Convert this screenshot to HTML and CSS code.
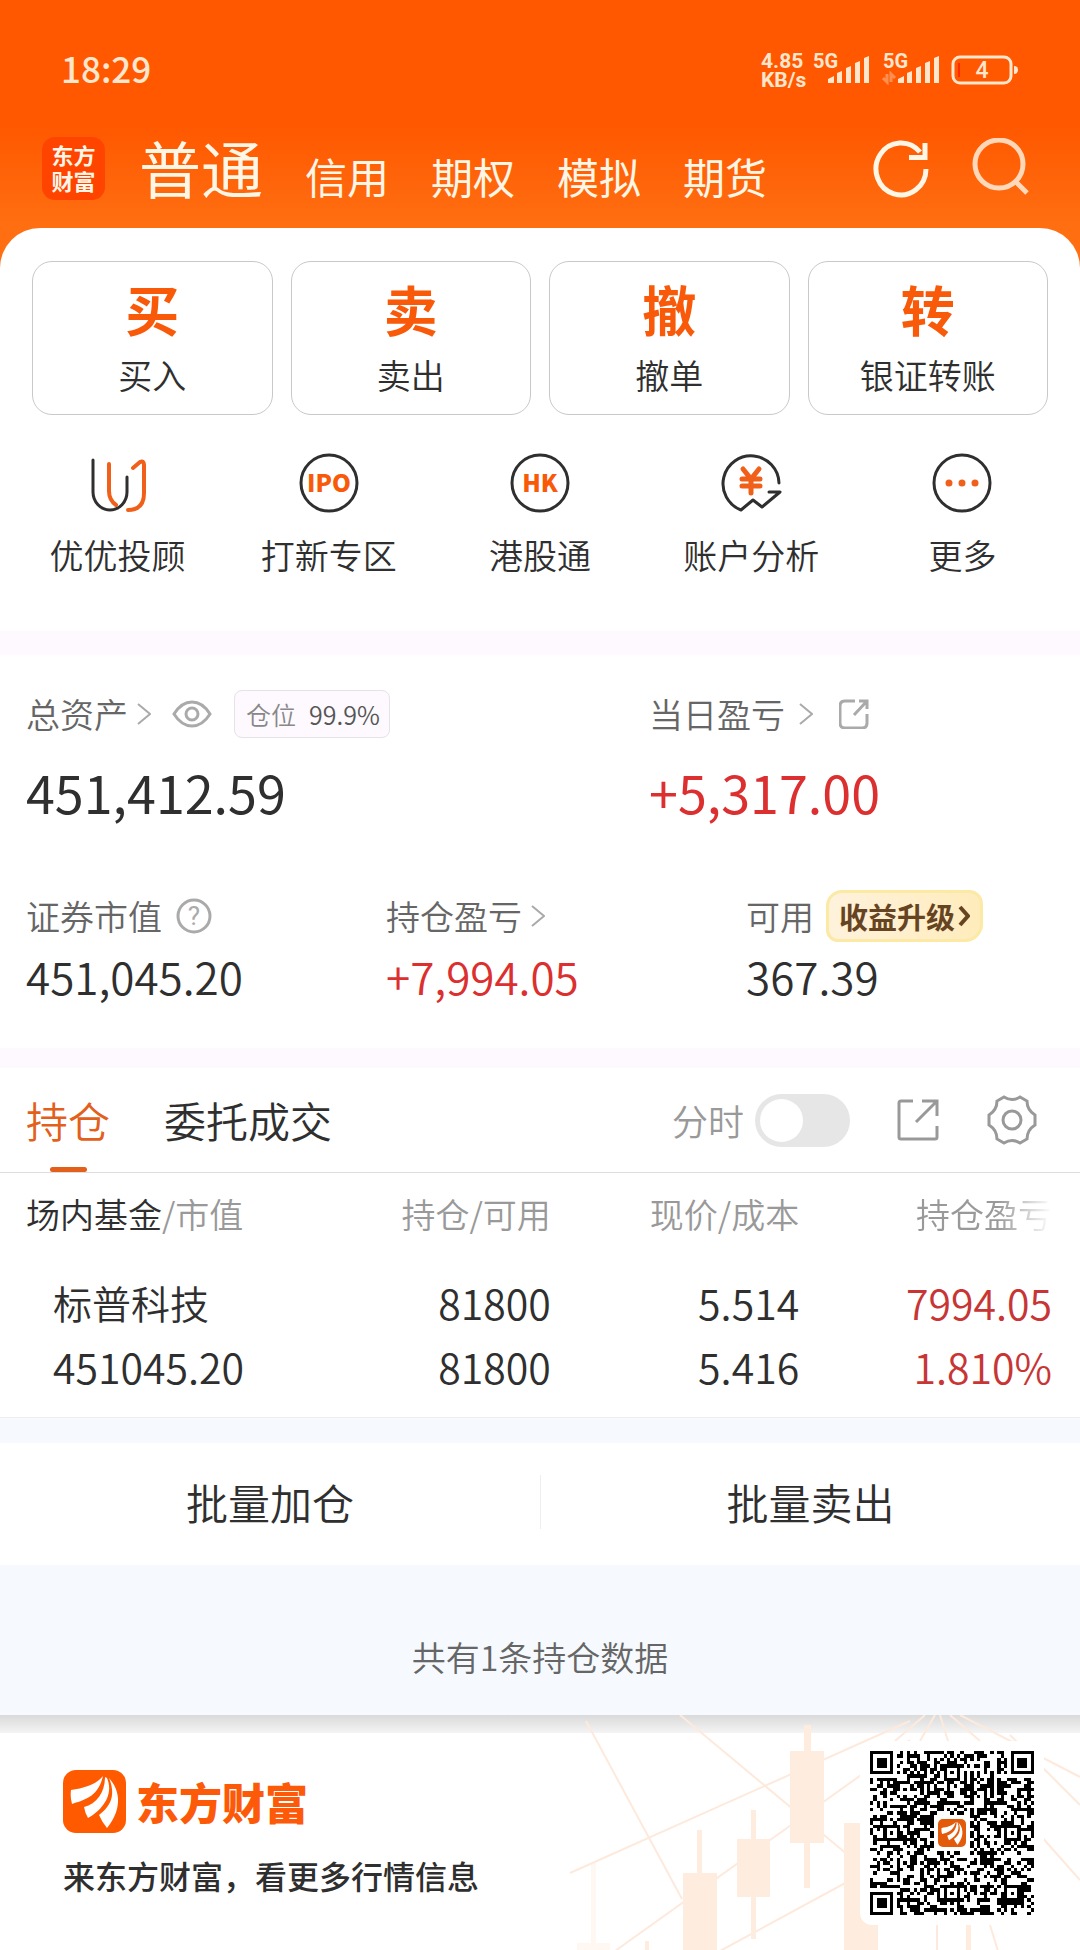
FILE: index.html
```html
<!DOCTYPE html>
<html lang="zh-CN">
<head>
<meta charset="utf-8">
<meta name="viewport" content="width=device-width, initial-scale=1">
<title>东方财富 - 普通交易</title>
<link rel="stylesheet" href="styles.css">
</head>
<body>
<svg class="defs" aria-hidden="true">
  <symbol id="petals" viewBox="0 0 63 63">
    <path d="M40 6C33 15 21 18 8 20Q7 27 9 34C20 30 35 28 40 6Z"/>
    <path d="M42 7C42 22 34 34 21 37Q22 43 25 48C36 42 52 27 44 8Z"/>
    <path d="M46 8C53 25 48 36 36 45Q39 52 44 58C54 46 62 26 46 8Z"/>
  </symbol>
  <symbol id="chevron" viewBox="0 0 14 24"><path d="M1 2l12 10L1 22"/></symbol>
</svg>

<header class="top">
  <div class="status">
    <time class="clock">18:29</time>
    <div class="signals">
      <div class="speed">4.85<br>KB/s</div>
      <svg class="radio" viewBox="0 -6 206 42" width="206" height="42">
        <g class="net"><text x="0" y="18">5G</text><text x="70" y="18">5G</text></g>
        <g class="bars">
          <path d="M15 33v-4l6-3v7zM24 33V23l5-2v12zM33 33V18l5-2v17zM42 33V13l5-2v22zM51 33V8l5-2v27z"/>
          <path d="M85 33v-4l6-3v7zM94 33V23l5-2v12zM103 33V18l5-2v17zM112 33V13l5-2v22zM121 33V8l5-2v27z"/>
        </g>
        <path class="traffic" d="M74 24v8l-4-4M78 32v-8l4 4"/>
        <rect class="cell" x="140" y="7" width="58" height="26" rx="7"/>
        <path class="charge" d="M146 13v14"/>
        <path class="tip" d="M201 16q4 0 4 4t-4 4z"/>
        <text class="level" x="169" y="28">4</text>
      </svg>
    </div>
  </div>
  <div class="accounts">
    <div class="brand">东方<br>财富</div>
    <nav class="modes">
      <a href="#" class="mode current">普通</a>
      <a href="#" class="mode">信用</a>
      <a href="#" class="mode">期权</a>
      <a href="#" class="mode">模拟</a>
      <a href="#" class="mode">期货</a>
    </nav>
    <button class="icon-btn" aria-label="刷新">
      <svg width="60" height="60" viewBox="0 0 60 60"><path d="M55 31A25 26 0 1 1 49 14M54 5V19.500H38"/></svg>
    </button>
    <button class="icon-btn faded" aria-label="搜索">
      <svg width="60" height="60" viewBox="0 0 60 60"><circle cx="28" cy="26" r="24"/><path d="M44 43l12 12"/></svg>
    </button>
  </div>
</header>

<main>
  <div class="sheet-wrap">
    <section class="sheet">
      <div class="trades">
        <button class="trade"><b>买</b><span>买入</span></button>
        <button class="trade"><b>卖</b><span>卖出</span></button>
        <button class="trade"><b>撤</b><span>撤单</span></button>
        <button class="trade"><b>转</b><span>银证转账</span></button>
      </div>
      <nav class="tools">
        <a href="#" class="tool">
          <svg viewBox="0 0 64 64"><path d="M7 9v32a17 18 0 0 0 34 0V26"/><path class="hot" d="M23 13v27q0 9 7 14M47 17l7-6q4-2 4 3v28q0 17-16 17"/></svg>
          优优投顾
        </a>
        <a href="#" class="tool">
          <svg viewBox="0 0 64 64"><circle cx="32" cy="32" r="28"/><text x="32" y="41">IPO</text></svg>
          打新专区
        </a>
        <a href="#" class="tool">
          <svg viewBox="0 0 64 64"><circle cx="32" cy="32" r="28"/><text x="32" y="41">HK</text></svg>
          港股通
        </a>
        <a href="#" class="tool">
          <svg viewBox="0 0 64 64"><path d="M60 32A28 28 0 1 0 22 59L34 49l9 7L61 41H50"/><path class="hot yen" d="M24 18l8 10 8-10M32 28v14M23 28h18M23 35h18"/></svg>
          账户分析
        </a>
        <a href="#" class="tool">
          <svg viewBox="0 0 64 64"><circle cx="32" cy="32" r="28"/><path class="hot dots" d="M19 32h0M32 32h0M45 32h0"/></svg>
          更多
        </a>
      </nav>
    </section>
  </div>

  <section class="assets">
    <div class="asset-row wide">
      <div class="asset">
        <div class="label">总资产
          <svg class="chev near" width="14" height="24"><use href="#chevron"/></svg>
          <svg class="eye" width="40" height="28" viewBox="0 0 40 28"><path d="M2 14C12-2 28-2 38 14 28 30 12 30 2 14Z"/><circle cx="20" cy="14" r="6"/></svg>
          <span class="position">仓位<span>99.9%</span></span>
        </div>
        <strong class="total">451,412.59</strong>
      </div>
      <div class="asset">
        <div class="label">当日盈亏
          <svg class="chev" width="14" height="24"><use href="#chevron"/></svg>
          <svg class="share" width="30" height="30" viewBox="0 0 30 30"><path d="M16 2H6Q1 2 1 7v17q0 5 5 5h17q5 0 5-5V15M20 2h8v8M28 2L15 16"/></svg>
        </div>
        <strong class="total up">+5,317.00</strong>
      </div>
    </div>
    <div class="asset-row">
      <div class="asset">
        <div class="label">证券市值
          <svg class="help" width="36" height="36" viewBox="0 0 36 36"><circle cx="18" cy="18" r="16"/><text x="18" y="27">?</text></svg>
        </div>
        <span class="value">451,045.20</span>
      </div>
      <div class="asset">
        <div class="label">持仓盈亏
          <svg class="chev near" width="14" height="24"><use href="#chevron"/></svg>
        </div>
        <span class="value up">+7,994.05</span>
      </div>
      <div class="asset">
        <div class="label">可用
          <button class="upgrade">收益升级<svg width="12" height="22" viewBox="0 0 12 22"><path d="M2 2l8 9-8 9"/></svg></button>
        </div>
        <span class="value">367.39</span>
      </div>
    </div>
  </section>

  <section class="holdings">
    <div class="tabs">
      <button class="tab active">持仓</button>
      <button class="tab">委托成交</button>
      <label class="minute">分时<input type="checkbox" class="switch"></label>
      <button class="tab-icon" aria-label="分享">
        <svg width="44" height="44" viewBox="0 0 44 44"><path d="M17 3H5Q3 3 3 5v34q0 2 2 2h34q2 0 2-2V28M26 3h15v15M41 3L20 24"/></svg>
      </button>
      <button class="tab-icon" aria-label="设置">
        <svg width="52" height="52" viewBox="0 0 52 52"><path d="M18 3Q26 8 34 3L41 7Q41 16 49 21V31Q41 36 41 45L34 49Q26 44 18 49L11 45Q11 36 3 31V21Q11 16 11 7Z"/><circle cx="26" cy="26" r="9"/></svg>
      </button>
    </div>
    <table class="positions">
      <thead>
        <tr><th><em>场内基金</em>/市值</th><th>持仓/可用</th><th>现价/成本</th><th><span class="fade">持仓盈亏</span></th></tr>
      </thead>
      <tbody>
        <tr><td><span class="name">标普科技</span><br>451045.20</td><td>81800<br>81800</td><td>5.514<br>5.416</td><td class="loss">7994.05<br>1.810%</td></tr>
      </tbody>
    </table>
    <div class="batch">
      <button>批量加仓</button>
      <button>批量卖出</button>
    </div>
    <p class="count">共有1条持仓数据</p>
  </section>
</main>

<footer class="promo">
  <svg class="chart" viewBox="0 0 540 236" width="540" height="236" aria-hidden="true">
    <g class="rays">
      <path d="M46 6L142 184M140 0L308 140M30 158L370 6M75 236L370 25M180 236L320 160M385 0L355 26M395 0L380 26M400 0L408 26M410 0L440 26M420 0L540 62M470 20L540 90M500 120L540 165M397 210V236M450 210l8 26"/>
    </g>
    <g class="candles">
      <path d="M264 10h7v26h13v92h-14v45h-6v-45h-14V36h14zM211 95h5v29h14v58h-14v42h-5v-42h-14v-58h14zM157 115h5v43h15v78h-34v-78h14zM304 108h34v128h-34zM105 226h4v10h-4zM426 208h5v28h-5z"/>
      <path class="pale" d="M51 148h5v80h14v8H37v-8h14z"/>
    </g>
  </svg>
  <div class="promo-text">
    <div class="wordmark"><svg class="mark" width="63" height="63"><use href="#petals"/></svg>东方财富</div>
    <p>来东方财富，看更多行情信息</p>
  </div>
  <div class="qr">
    <svg id="qr" viewBox="0 0 49 49" width="164" height="164" role="img" aria-label="二维码"></svg>
    <svg class="mark small" width="28" height="28"><use href="#petals"/></svg>
  </div>
</footer>
<script src="qr.js"></script>
</body>
</html>
```
FILE: styles.css
```css
* { box-sizing: border-box; }
body {
  margin: 0;
  background: #fff;
  color: #2f2f2f;
  font-family: "Noto Sans CJK SC", "Noto Sans", sans-serif;
  font-weight: 350;
  font-size: 34px;
  line-height: 44px;
}
button { border: 0; padding: 0; background: none; color: inherit; font: inherit; }
a { color: inherit; text-decoration: none; }
p { margin: 0; }
svg { display: block; fill: none; stroke: currentColor; }
svg text { stroke: none; fill: currentColor; }
.defs { position: absolute; width: 0; height: 0; }

/* Orange header */
.top {
  height: 228px;
  padding: 44px 49px 0 42px;
  background: linear-gradient(#ff5800 55%, #ff6f12);
  color: #fff6e6;
}
.status { display: flex; justify-content: space-between; padding: 0 12px 0 19px; color: #ffe6cc; }
.clock { padding-top: 2px; font-size: 35px; font-weight: 500; line-height: 44px; }
.signals { display: flex; gap: 4px; }
.speed { width: 48px; padding-top: 8px; font: 700 21px/19px Roboto, sans-serif; white-space: nowrap; }
.radio text { font: 700 20px Roboto, sans-serif; }
.radio .level { font-size: 23px; font-weight: 500; text-anchor: middle; }
.bars, .tip { fill: currentColor; stroke: none; }
.traffic { stroke-width: 3; opacity: .4; }
.cell { stroke-width: 3; }
.charge { stroke: #ff2a00; stroke-width: 2; }
.accounts { display: flex; align-items: center; margin-top: 46px; height: 64px; }
.brand {
  width: 63px;
  height: 63px;
  padding-top: 4px;
  border-radius: 13px;
  background: #ff4400;
  text-align: center;
  font-size: 22px;
  font-weight: 700;
  line-height: 26px;
}
.modes { display: flex; align-items: baseline; gap: 42px; flex: 1; padding: 6px 0 0 34px; }
.mode { font-size: 42px; line-height: 64px; font-weight: 400; white-space: nowrap; }
.mode.current { font-size: 62px; }
.icon-btn { margin-left: 40px; }
.icon-btn svg { stroke-width: 5; }
.faded { opacity: .8; }

/* Main actions */
.sheet-wrap { background: #ff6f12; }
.sheet { padding: 33px 32px 54px; border-radius: 40px 40px 0 0; background: #fff; }
.trades { display: grid; grid-template-columns: repeat(4, 1fr); gap: 18px; }
.trade {
  display: flex;
  flex-direction: column;
  align-items: center;
  height: 154px;
  padding-top: 13px;
  border: 1px solid #c8c8c8;
  border-radius: 20px;
}
.trade b { color: #f85a0a; font-size: 54px; line-height: 68px; font-weight: 700; }
.trade span { line-height: 64px; }
.tools { display: grid; grid-template-columns: repeat(5, 1fr); margin: 36px -20px 0; }
.tool { display: flex; flex-direction: column; align-items: center; gap: 18px; }
.tool svg { width: 64px; height: 64px; stroke-width: 3; stroke-linecap: round; stroke-linejoin: round; }
.tool text { fill: #f85a0a; text-anchor: middle; font: 900 24px "Noto Sans CJK SC", sans-serif; }
.tool .hot { stroke: #f0601a; stroke-width: 4; }
.tool .yen { stroke-width: 5; }
.tool .dots { stroke-width: 7; }

/* Asset summary */
.assets { padding: 35px 0 44px; border: solid #fdf9fe; border-width: 24px 0 20px; }
.asset-row { display: grid; grid-template-columns: repeat(3, 1fr); margin-top: 66px; }
.asset-row.wide { grid-template-columns: 15fr 11fr; margin-top: 0; }
.asset { padding-left: 26px; }
.label { display: flex; align-items: center; height: 48px; color: #666; white-space: nowrap; }
.label svg { color: #aaa; stroke-width: 3; }
.label .chev { margin-left: 14px; stroke-width: 2; }
.label .near { margin-left: 9px; }
.eye { margin-left: 21px; }
.share { margin-left: 26px; }
.help { margin-left: 14px; }
.help text { font: 400 26px Roboto, sans-serif; text-anchor: middle; }
.position {
  display: flex;
  gap: 13px;
  margin-left: 22px;
  padding: 0 9px 0 11px;
  border: 1px solid #e6e2e8;
  border-radius: 8px;
  background: #fdf9ff;
  color: #888;
  font-size: 25px;
  line-height: 46px;
}
.position span { color: #555; }
.total { display: block; margin-top: 20px; font-size: 52px; line-height: 68px; font-weight: 400; }
.value { display: block; margin-top: 8px; font-size: 44px; line-height: 56px; }
.up { color: #dc2f2f; }
.upgrade {
  display: flex;
  align-items: center;
  gap: 3px;
  height: 52px;
  margin-left: 12px;
  padding: 0 10px;
  border: 3px solid #fbe9a4;
  border-radius: 16px 14px 18px 12px;
  background: linear-gradient(90deg, #fff2dc, #ffecbc);
  color: #664422;
  font-size: 29px;
  font-weight: 700;
}
.label .upgrade svg { color: inherit; stroke-width: 4; }

/* Holdings */
.tabs { display: flex; align-items: center; height: 105px; padding: 0 42px 0 26px; border-bottom: 1px solid #ddd; }
.tab { position: relative; height: 104px; margin-right: 54px; font-size: 42px; line-height: 104px; white-space: nowrap; }
.tab.active { color: #e2601c; }
.tab.active::after {
  content: "";
  position: absolute;
  left: calc(50% - 18px);
  bottom: 0;
  width: 37px;
  height: 5px;
  border-radius: 3px;
  background: #e2601c;
}
.minute { display: flex; align-items: center; gap: 11px; margin-left: auto; color: #999; font-size: 36px; }
.switch {
  appearance: none;
  width: 95px;
  height: 53px;
  margin: 0;
  padding: 5px;
  border-radius: 27px;
  background: #e6e6e6;
}
.switch::before { content: ""; display: block; width: 43px; height: 43px; border-radius: 50%; background: #fff; }
.switch:checked { background: #e2601c; }
.switch:checked::before { margin-left: auto; }
.tab-icon { margin-left: 46px; color: #999; }
.tab-icon svg { stroke-width: 3; }
.positions { width: 100%; border-collapse: collapse; table-layout: fixed; border-bottom: 1px solid #eee; }
.positions th { width: 23%; padding: 19px 0 23px; color: #999; font-weight: 350; text-align: right; white-space: nowrap; }
.positions th:first-child { width: 28%; padding-left: 26px; text-align: left; }
.positions th:last-child { width: 26%; }
.positions em { color: #2f2f2f; font-style: normal; }
.positions td { padding: 10px 0 19px; text-align: right; font-size: 41px; line-height: 64px; }
.positions td:first-child { padding-left: 53px; text-align: left; }
.positions th:last-child, .positions td:last-child { padding-right: 28px; }
.name { font-size: 39px; }
.loss { color: #c83535; }
.fade { -webkit-mask-image: linear-gradient(90deg, #000 60%, transparent); mask-image: linear-gradient(90deg, #000 60%, transparent); }
.batch { display: grid; grid-template-columns: 1fr 1fr; padding: 32px 0 36px; border-top: 25px solid #f6faff; }
.batch button { font-size: 42px; line-height: 54px; }
.batch button + button { border-left: 1px solid #eee; }
.count { padding: 70px 0 36px; background: #f6faff; color: #666; text-align: center; }

/* Promotion footer */
.promo {
  position: relative;
  display: flex;
  justify-content: space-between;
  align-items: flex-start;
  min-height: 236px;
  padding: 26px 36px 26px 63px;
  background: linear-gradient(#dadada, #f4f4f4 18px, #fff 18px);
  overflow: hidden;
}
.chart { position: absolute; right: 0; top: 0; }
.rays { stroke: #fdeadc; stroke-width: 2; }
.candles { fill: #feecde; stroke: none; }
.pale { opacity: .4; }
.promo-text { padding-top: 29px; font-size: 32px; font-weight: 500; }
.wordmark { display: flex; align-items: center; gap: 10px; margin-bottom: 20px; color: #fc5a08; font-size: 43px; font-weight: 900; line-height: 63px; }
.mark { border-radius: 13px; background: #ff5a00; color: #fff; fill: #fff; stroke: none; }
.qr { position: relative; padding: 10px; border-radius: 12px; background: #fff; }
#qr { fill: #000; stroke: none; shape-rendering: crispEdges; }
.mark.small {
  position: absolute;
  left: calc(50% - 14px);
  top: calc(50% - 14px);
  border-radius: 5px;
  background: #e25a0a;
  box-shadow: 0 0 0 3px #fff;
}
```
FILE: qr.js
```js
// Draws a version 8 (49 x 49) code: finder, timing and alignment patterns plus data modules.
(function () {
  var size = 49;
  var seed = 20468;
  var path = "";

  function random() {
    seed = (seed * 1103515245 + 12345) % 2147483648;
    return seed / 2147483648;
  }

  // Ring distance from a pattern's centre
  function ring(x, y, cx, cy) {
    return Math.max(Math.abs(x - cx), Math.abs(y - cy));
  }

  var finders = [[3, 3], [45, 3], [3, 45]];
  var alignments = [[24, 6], [6, 24], [42, 24], [24, 42], [42, 42]];

  function dark(x, y) {
    var i, d;
    for (i = 0; i < finders.length; i++) {
      d = ring(x, y, finders[i][0], finders[i][1]);
      if (d <= 4) return d !== 2 && d !== 4;
    }
    for (i = 0; i < alignments.length; i++) {
      d = ring(x, y, alignments[i][0], alignments[i][1]);
      if (d <= 2) return d !== 1;
    }
    if (ring(x, y, 24, 24) <= 5) return false;
    if (x === 6 || y === 6) return (x + y) % 2 === 0;
    return random() < 0.5;
  }

  for (var y = 0; y < size; y++) {
    for (var x = 0; x < size; x++) {
      if (dark(x, y)) path += "M" + x + " " + y + "h1v1h-1z";
    }
  }

  var shape = document.createElementNS("http://www.w3.org/2000/svg", "path");
  shape.setAttribute("d", path);
  document.getElementById("qr").appendChild(shape);
})();
```
